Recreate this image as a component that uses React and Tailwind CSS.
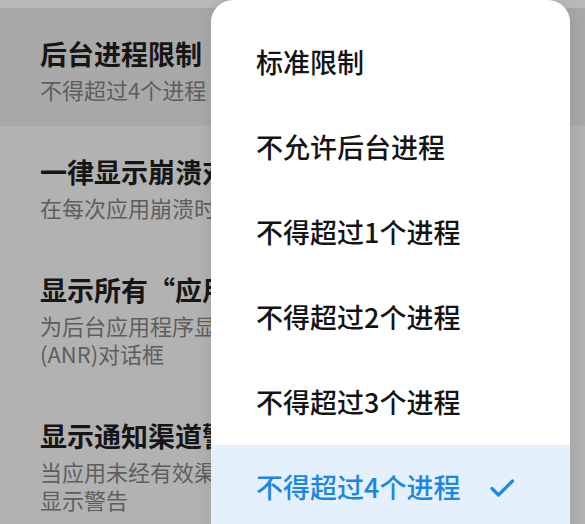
const settings = [
  { title: '后台进程限制', lines: ['不得超过4个进程'], pressed: true },
  { title: '一律显示崩溃对话框', lines: ['在每次应用崩溃时显示对话框'] },
  { title: '显示所有“应用无响应”', lines: ['为后台应用程序显示“应用无响应”', '(ANR)对话框'] },
  { title: '显示通知渠道警告', lines: ['当应用未经有效渠道发布通知时，在屏幕上', '显示警告'] },
]

const options = [
  '标准限制',
  '不允许后台进程',
  '不得超过1个进程',
  '不得超过2个进程',
  '不得超过3个进程',
  '不得超过4个进程',
]

const selected = '不得超过4个进程'

function CheckMark() {
  return (
    <svg width="24" height="20" viewBox="0 0 24 20" fill="none" className="ml-[30px] shrink-0">
      <path d="M2 10.5 L8.5 17 L22.5 3" stroke="#1e88e5" strokeWidth="3.2" strokeLinecap="round" strokeLinejoin="round" />
    </svg>
  )
}

export default function App() {
  return (
    <div className="relative w-[585px] h-[524px] overflow-hidden bg-[#b2b2b2] font-['Noto_Sans_CJK_SC','Noto_Sans',sans-serif]">
      <div className="h-2 bg-[#bababa]" />

      {/* settings list behind the dim; text is cut where the popup starts */}
      {settings.map(s => (
        <div key={s.title} className={`pl-10 pt-[29px] pb-[23px] ${s.pressed ? 'bg-[#a9a9a9]' : ''}`}>
          <div className="w-[171px] overflow-hidden">
            <div className="text-[27px] leading-[34px] font-bold text-[#161616] whitespace-nowrap">{s.title}</div>
            <div className="mt-1 text-[22px] leading-[28px] text-[#5e5e5e]">
              {s.lines.map(l => (
                <div key={l} className="whitespace-nowrap">{l}</div>
              ))}
            </div>
          </div>
        </div>
      ))}

      {/* options popup */}
      <div className="absolute left-[211px] top-0 w-[359px] h-[580px] bg-white rounded-t-[22px] pt-5 shadow-[0_0_18px_rgba(0,0,0,0.1)]">
        {options.map(o => {
          const active = o === selected
          return (
            <div
              key={o}
              className={`h-[85px] pl-[45px] flex items-center text-[27px] font-medium ${active ? 'bg-[#e4f0fc] text-[#1b87e5]' : 'text-[#141414]'}`}
            >
              <span className="whitespace-nowrap">{o}</span>
              {active && <CheckMark />}
            </div>
          )
        })}
      </div>
    </div>
  )
}
